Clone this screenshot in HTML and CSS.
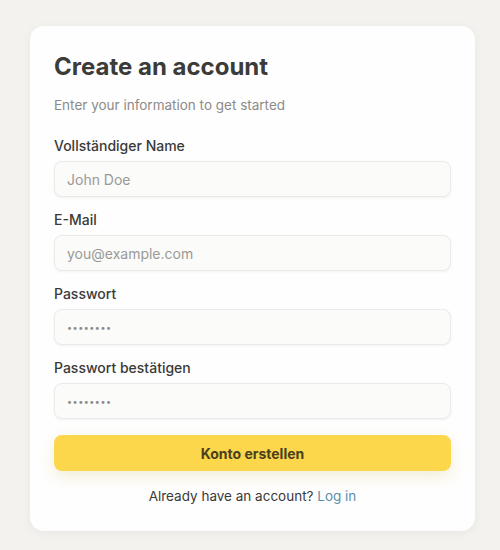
FILE: index.html
```html
<!DOCTYPE html>
<html lang="de">
<head>
<meta charset="utf-8">
<link rel="stylesheet" href="styles.css">
</head>
<body>
<div class="card">
  <h1 class="title">Create an account</h1>
  <p class="subtitle">Enter your information to get started</p>
  <form class="form">
    <div class="field">
      <label class="label">Vollständiger Name</label>
      <div class="input"><span class="ph">John Doe</span></div>
    </div>
    <div class="field">
      <label class="label">E-Mail</label>
      <div class="input"><span class="ph">you@example.com</span></div>
    </div>
    <div class="field">
      <label class="label">Passwort</label>
      <div class="input"><span class="dots">••••••••</span></div>
    </div>
    <div class="field">
      <label class="label">Passwort bestätigen</label>
      <div class="input"><span class="dots">••••••••</span></div>
    </div>
    <div class="button">Konto erstellen</div>
  </form>
  <p class="footer">Already have an account? <a class="link">Log in</a></p>
</div>
</body>
</html>
```
FILE: styles.css
```css
* { box-sizing: border-box; }
html, body { margin: 0; padding: 0; }
body {
  background: #f3f2ef;
  font-family: Inter, "Noto Sans", sans-serif;
  color: #3a3a38;
  width: 500px;
  height: 550px;
  padding: 26px 25px 0 30px;
}
.card {
  background: #fefefe;
  border-radius: 14px;
  padding: 24px 24px 25px;
  box-shadow: 0 2px 10px rgba(0,0,0,0.05);
  width: 445px;
}
.title {
  margin: 0;
  font-size: 24px;
  font-weight: 700;
  letter-spacing: 0;
  line-height: 34px;
  color: #3b3b39;
}
.subtitle {
  margin: 11px 0 0;
  font-size: 13.5px;
  line-height: 20px;
  color: #8c8b88;
}
.form {
  display: flex;
  flex-direction: column;
  gap: 13px;
  margin-top: 21px;
}
.field {
  display: flex;
  flex-direction: column;
  gap: 5px;
}
.label {
  font-size: 14px;
  font-weight: 500;
  line-height: 20px;
  color: #3a3a38;
}
.input {
  height: 36px;
  border: 1px solid #ebeae8;
  border-radius: 8px;
  background: #fbfbfa;
  box-shadow: 0 1px 3px rgba(0,0,0,0.05);
  padding: 0 12px;
  display: flex;
  align-items: center;
  font-size: 14px;
}
.ph { color: #9a9997; }
.dots { color: #8a8987; font-size: 9px; letter-spacing: 0.5px; }
.button {
  margin-top: 3px;
  height: 36px;
  border-radius: 8px;
  background: #fcd64b;
  color: #4a3f1c;
  font-size: 14px;
  font-weight: 700;
  display: flex;
  align-items: center;
  justify-content: center;
  box-shadow: 0 6px 16px rgba(200,170,60,0.2);
}
.footer {
  margin: 15px 0 0;
  text-align: center;
  font-size: 13.5px;
  line-height: 20px;
  color: #3a3a38;
}
.link { color: #5c8fae; }
```
